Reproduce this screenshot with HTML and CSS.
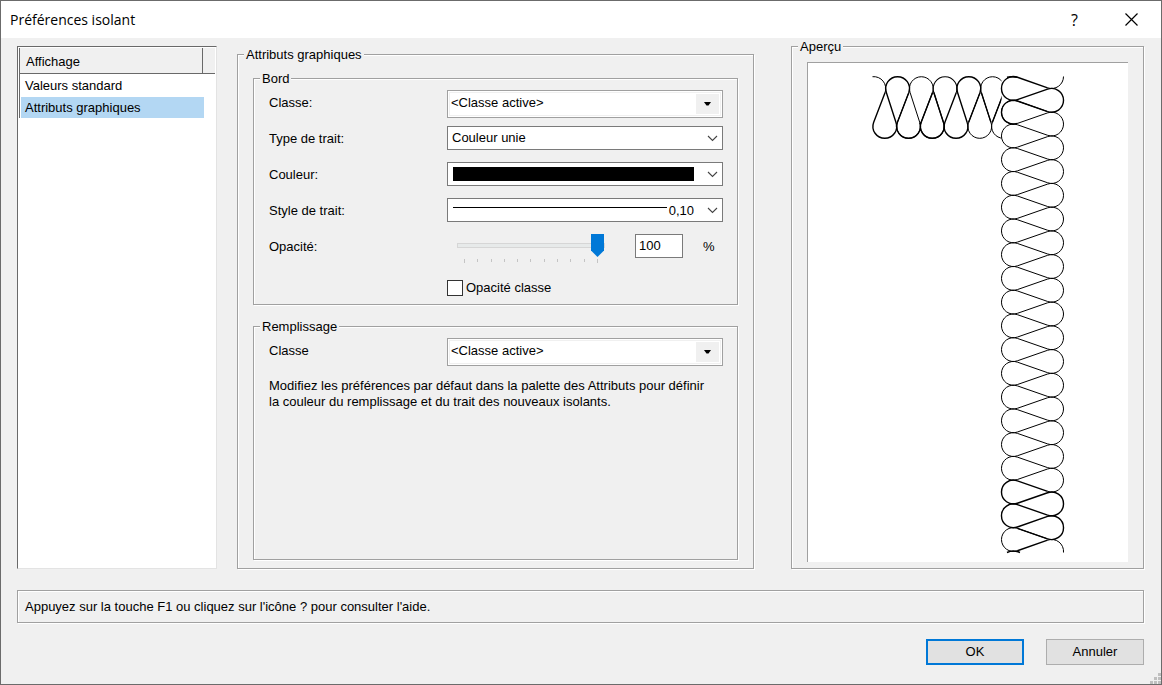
FILE: index.html
```html
<!DOCTYPE html>
<html lang="fr">
<head>
<meta charset="utf-8">
<meta name="viewport" content="width=device-width, initial-scale=1">
<title>Préférences isolant</title>
<link rel="stylesheet" href="styles.css">
</head>
<body>
<form class="dialog">
  <header class="titlebar">
    <h1 class="title">Préférences isolant</h1>
    <button type="button" class="title-button help">?</button>
    <button type="button" class="title-button" aria-label="Fermer">
      <svg width="13" height="13" viewBox="0 0 13 13" aria-hidden="true"><path d="M.5 .5l12 12M12.5 .5l-12 12"/></svg>
    </button>
  </header>

  <main class="panes">
    <nav class="sections">
      <div class="sections-inner">
        <div class="sections-head"><span class="sections-title">Affichage</span></div>
        <button type="button" class="section">Valeurs standard</button>
        <button type="button" class="section selected" aria-current="true">Attributs graphiques</button>
      </div>
    </nav>

    <fieldset class="group attributes">
      <legend>Attributs graphiques</legend>
      <div class="stack">
        <fieldset class="group edge">
          <legend>Bord</legend>
          <div class="fields">
            <label for="edge-class">Classe:</label>
            <div class="picker class-picker">
              <select id="edge-class"><option>&lt;Classe active&gt;</option></select>
              <span class="arrow-box"><svg width="7" height="4" viewBox="0 0 7 4" aria-hidden="true"><path d="M0 0h7L4.500 3.500h-2z"/></svg></span>
            </div>
            <label for="line-type">Type de trait:</label>
            <div class="picker">
              <select id="line-type"><option>Couleur unie</option></select>
              <svg class="chevron" width="11" height="7" viewBox="0 0 11 7" aria-hidden="true"><path d="M1 1l4.500 4.500L10 1"/></svg>
            </div>
            <label for="color">Couleur:</label>
            <div class="picker">
              <select id="color" class="swatch"><option value="#000000"></option></select>
              <svg class="chevron" width="11" height="7" viewBox="0 0 11 7" aria-hidden="true"><path d="M1 1l4.500 4.500L10 1"/></svg>
            </div>
            <label for="line-style">Style de trait:</label>
            <div class="picker">
              <select id="line-style" class="stroke"><option>0,10</option></select>
              <svg class="chevron" width="11" height="7" viewBox="0 0 11 7" aria-hidden="true"><path d="M1 1l4.500 4.500L10 1"/></svg>
            </div>
            <label for="opacity">Opacité:</label>
            <div class="opacity">
              <div class="slider">
                <input id="opacity" type="range" min="0" max="100" value="100">
                <div class="ticks"><i></i><i></i><i></i><i></i><i></i><i></i><i></i><i></i><i></i><i></i><i></i></div>
              </div>
              <input class="amount" type="text" value="100" aria-label="Opacité en pour cent">
              <span class="unit">%</span>
            </div>
            <label class="check"><input type="checkbox">Opacité classe</label>
          </div>
        </fieldset>

        <fieldset class="group fill">
          <legend>Remplissage</legend>
          <div class="fields">
            <label for="fill-class">Classe</label>
            <div class="picker class-picker">
              <select id="fill-class"><option>&lt;Classe active&gt;</option></select>
              <span class="arrow-box"><svg width="7" height="4" viewBox="0 0 7 4" aria-hidden="true"><path d="M0 0h7L4.500 3.500h-2z"/></svg></span>
            </div>
            <p class="note">Modifiez les préférences par défaut dans la palette des Attributs pour définir la couleur du remplissage et du trait des nouveaux isolants.</p>
          </div>
        </fieldset>
      </div>
    </fieldset>

    <fieldset class="group preview">
      <legend>Aperçu</legend>
      <div class="canvas">
        <svg viewBox="0 0 320 498" role="img" aria-label="Aperçu de l'isolant">
          <defs>
            <clipPath id="arm"><path d="M60 0H193.500V90H60z"/></clipPath>
            <path id="h1" d="M0 0l-11.500 29.900a11.900 11.900 0 1 0 22.400 0l-9.660 -29.900a11.900 11.900 0 1 1 22.500 0"/>
            <path id="v1" d="M0 0l-30.200 -10.530a11.900 11.900 0 1 0 0 22.400l30.200 -10.530a11.900 11.900 0 1 1 0 22.400"/>
            <g id="v5"><use href="#v1"/><use href="#v1" y="23.740"/><use href="#v1" y="47.480"/><use href="#v1" y="71.220"/><use href="#v1" y="94.960"/></g>
          </defs>
          <g clip-path="url(#arm)">
            <path class="fine" d="M64.500 13.200A12 12 0 0 1 77.100 29"/>
            <use class="bold" href="#h1" x="77.100" y="29"/>
            <use class="fine" href="#h1" x="100.840" y="29"/>
            <use class="medium" href="#h1" x="124.580" y="29"/>
            <use class="bold" href="#h1" x="148.320" y="29"/>
            <use class="fine" href="#h1" x="172.060" y="29"/>
            <use class="fine" href="#h1" x="195.800" y="29"/>
            <path class="bold" d="M100.840 29l-11.500 29.900a11.900 11.900 0 1 0 22.400 0M124.580 29l-11.500 29.900a11.900 11.900 0 1 0 22.400 0l-9.660 -29.900M172.060 29l-11.500 29.900M173.300 29l9.660 29.900M195.800 29l-11.500 29.900"/>
          </g>
          <path class="fine" d="M255.500 13A11.900 11.900 0 0 1 239.600 24.300"/>
          <use class="bold" href="#v1" x="239.600" y="24.300"/>
          <path class="bold" d="M199 13.800q5 -1 10.400 0M239.600 48.040l-30.200 -10.530a11.900 11.900 0 1 0 0 22.400"/>
          <use class="fine" href="#v5" x="239.600" y="48.040"/>
          <use class="fine" href="#v5" x="239.600" y="166.740"/>
          <use class="fine" href="#v5" x="239.600" y="285.440"/>
          <use class="fine" href="#v1" x="239.600" y="404.140"/>
          <use class="bold" href="#v1" x="239.600" y="427.880"/>
          <use class="bold" href="#v1" x="239.600" y="451.620"/>
          <path class="fine" d="M239.600 475.360l-30.200 -10.530a11.900 11.900 0 1 0 0 22.400M239.600 476.700A11.900 11.900 0 0 1 255.500 489"/>
          <path class="bold" d="M239.600 475.360l-30.200 -10.530M209.400 487.230l30.200 -10.530M199 489q6 -3 13 0"/>
        </svg>
      </div>
    </fieldset>
  </main>

  <p class="hint">Appuyez sur la touche F1 ou cliquez sur l'icône ? pour consulter l'aide.</p>

  <footer class="actions">
    <button type="submit" class="action primary">OK</button>
    <button type="button" class="action">Annuler</button>
  </footer>
  <svg class="grip" width="11" height="11" viewBox="0 0 11 11" aria-hidden="true"><path d="M8 0h3v3H8zM4 4h3v3H4zM8 4h3v3H8zM0 8h3v3H0zM4 8h3v3H4zM8 8h3v3H8z"/></svg>
</form>
</body>
</html>
```

FILE: styles.css
```css
* { box-sizing: border-box; }

body {
  margin: 0;
  background: #f0f0f0;
  color: #000;
  font: 13px/16px "Liberation Sans", Arial, sans-serif;
}

button, input, select {
  margin: 0;
  border-radius: 0;
  color: inherit;
  font: inherit;
}

.dialog {
  position: relative;
  display: flex;
  flex-direction: column;
  min-height: 100vh;
  border: 1px solid #6b6b6b;
  background: #f0f0f0;
}

/* Title bar */
.titlebar {
  display: flex;
  align-items: stretch;
  height: 37px;
  padding: 0 1px 0 9px;
  background: #fff;
}
.title {
  flex: 1;
  margin: 0;
  font: 14px/37px "Open Sans", "Noto Sans", sans-serif;
}
.title-button {
  display: grid;
  place-items: center;
  width: 57px;
  padding: 0;
  border: 0;
  background: none;
}
.title-button svg { fill: none; stroke: #000; stroke-width: 1.2; }
.help { font: 16px/36px "Open Sans", "Noto Sans", sans-serif; }

/* Three panes */
.panes {
  flex: 1;
  display: grid;
  grid-template-columns: 200px minmax(0, 1fr) 353px;
  padding: 0 17px 0 16px;
}

.sections {
  margin-top: 8px;
  padding: 1px;
  border: 1px solid;
  border-color: #696969 #e3e3e3 #e3e3e3 #696969;
  background: #fff;
}
.sections-inner { border-left: 1px solid #696969; }
.sections-head {
  display: flex;
  height: 26px;
  padding-right: 12px;
  border-bottom: 1px solid #696969;
  background: #f0f0f0;
}
.sections-title {
  flex: 1;
  padding-left: 6px;
  border-right: 1px solid #696969;
  line-height: 27px;
}
.section {
  display: block;
  width: calc(100% - 12px);
  height: 21px;
  margin: 1px 0 0 1px;
  padding: 0 4px;
  border: 0;
  background: none;
  text-align: left;
}
.section.selected { background: #b3d7f3; }

/* Etched group boxes */
.group {
  min-width: 0;
  margin: 0;
  padding: 0;
  border: 1px solid #a0a0a0;
  box-shadow: 1px 1px 0 #fff, inset 1px 1px 0 #fff;
}
.group > legend {
  height: 16px;
  margin-left: 6px;
  padding: 0 2px;
  background: #f0f0f0;
  line-height: 18px;
}

.attributes { margin: 8px 37px 0 20px; }
.stack {
  display: flex;
  flex-direction: column;
  gap: 13px;
  height: 100%;
  padding: 8px 15px;
}
.fill { flex: 1; }

.fields {
  display: grid;
  grid-template-columns: 178px minmax(0, 1fr);
  align-items: start;
  padding: 4px 14px 0 15px;
}
.edge .fields { grid-template-rows: repeat(5, 36px) auto; }
.fill .fields { grid-template-rows: 36px auto; }
.fields > label { line-height: 26px; }
.fields > label[for$="class"] { line-height: 25px; }

/* Drop-downs */
.picker { position: relative; }
.picker select {
  display: block;
  width: 100%;
  height: 24px;
  padding: 0 28px 1px 4px;
  border: 1px solid #7a7a7a;
  background: #fff;
  appearance: none;
}
.class-picker select {
  height: 28px;
  padding: 0 28px 3px 3px;
  border-color: #a0a0a0;
  box-shadow: inset 0 0 0 1px #fff, inset 0 0 0 2px #f0f0f0;
}
.picker .swatch {
  padding: 4px 28px 4px 5px;
  background: linear-gradient(#000, #000) content-box, #fff;
}
.picker .stroke {
  padding: 1px 28px 0 5px;
  background: linear-gradient(#000, #000) no-repeat 5px 8px / calc(100% - 60px) 1px, #fff;
  text-align-last: right;
}
.chevron {
  position: absolute;
  top: 9px;
  right: 5px;
  fill: none;
  stroke: #444;
  stroke-width: 1.1;
  pointer-events: none;
}
.arrow-box {
  position: absolute;
  top: 4px;
  right: 4px;
  display: grid;
  place-items: center;
  width: 23px;
  height: 20px;
  background: #f0f0f0;
  pointer-events: none;
}

/* Opacity */
.opacity {
  display: flex;
  padding-left: 10px;
}
.slider { flex: 1; }
.slider input {
  display: block;
  width: 100%;
  height: 23px;
  appearance: none;
  background: none;
}
.slider input::-webkit-slider-runnable-track {
  height: 5px;
  border: 1px solid #d6d6d6;
  background: #e7eaea;
}
.slider input::-webkit-slider-thumb {
  width: 13px;
  height: 23px;
  margin-top: -10px;
  appearance: none;
  background: #0078d7;
  clip-path: polygon(0 0, 100% 0, 100% 72%, 50% 100%, 0 72%);
}
.ticks {
  display: flex;
  justify-content: space-between;
  padding: 2px 7px 0;
}
.ticks i { width: 1px; height: 3px; background: #c4c4c4; }
.ticks i:first-child, .ticks i:last-child { height: 4px; }
.amount {
  width: 48px;
  height: 24px;
  margin: 0 20px 0 30px;
  padding: 0 3px 2px;
  border: 1px solid #7a7a7a;
  background: #fff;
}
.unit { width: 20px; line-height: 26px; }

.fields > .check {
  grid-column: 2;
  display: flex;
  align-items: center;
  gap: 3px;
  padding: 10px 0 8px;
  line-height: 16px;
}
.check input {
  width: 16px;
  height: 16px;
  appearance: none;
  border: 1px solid #333;
  background: #fff;
}

.note {
  grid-column: 1 / -1;
  margin: 4px 0;
  padding-right: 6px;
}

/* Preview */
.preview > .canvas {
  height: calc(100% - 14px);
  margin: 8px 15px 6px;
  border: 1px solid #a0a0a0;
  border-width: 1px 0 0 1px;
  background: #fff;
}
.canvas svg {
  display: block;
  width: 100%;
  height: 0;
  min-height: 100%;
  fill: none;
  stroke: #000;
}
.fine { stroke-width: 1; }
.medium { stroke-width: 1.1; }
.bold { stroke-width: 1.4; }

/* Hint and actions */
.hint {
  margin: 21px 17px 16px 16px;
  padding: 8px 7px 7px;
  border: 1px solid #a0a0a0;
  box-shadow: 1px 1px 0 #fff, inset 1px 1px 0 #fff;
}
.actions {
  display: flex;
  justify-content: flex-end;
  gap: 22px;
  padding: 0 17px 19px;
}
.action {
  width: 98px;
  height: 26px;
  padding: 0;
  border: 1px solid #adadad;
  background: #e1e1e1;
}
.primary { border: 2px solid #0078d7; }
.grip { position: absolute; right: 0; bottom: 0; fill: #bfbfbf; }
```
